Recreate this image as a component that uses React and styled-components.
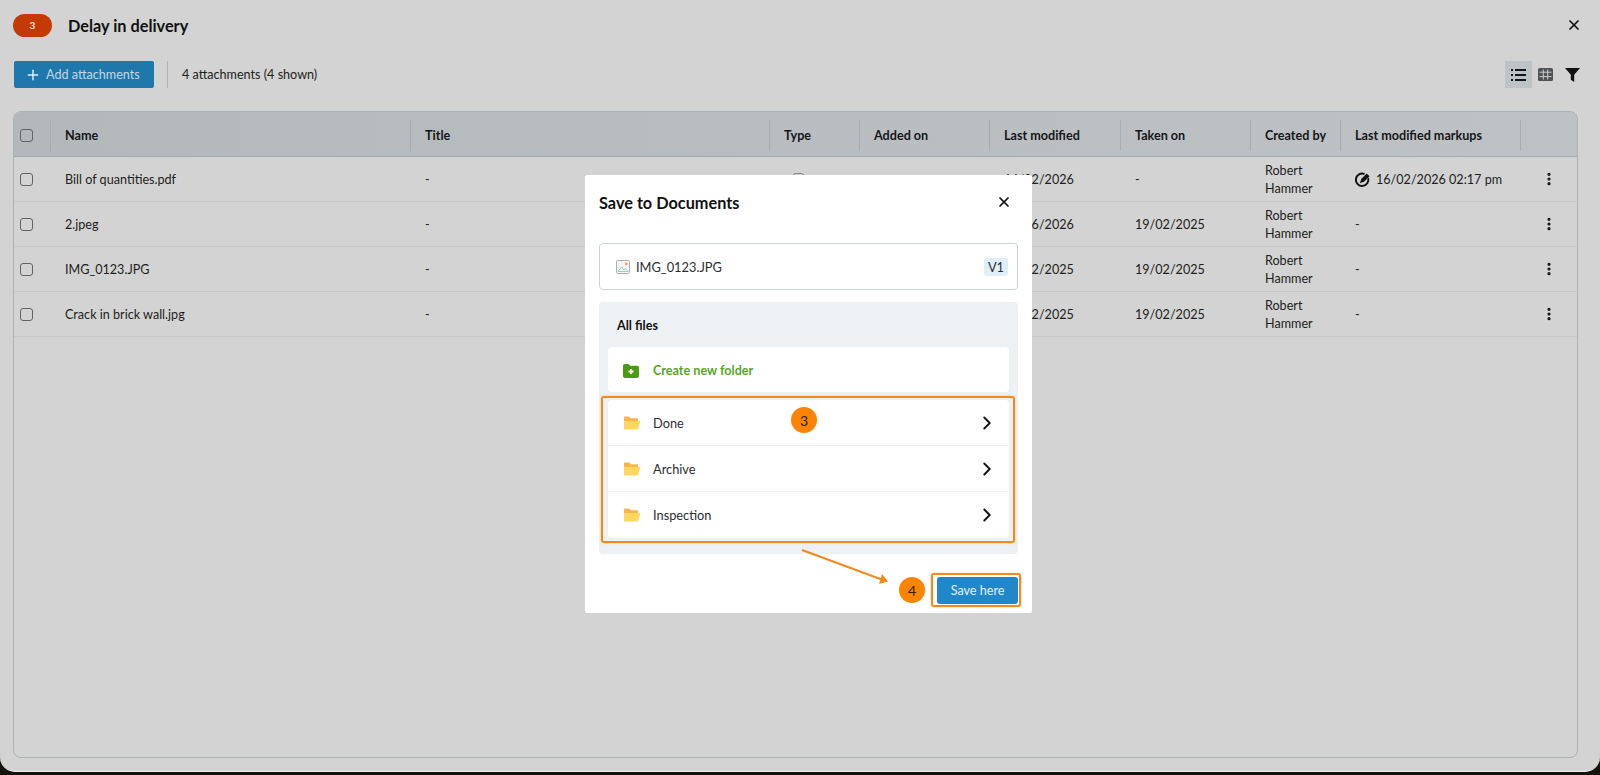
import React from "react";
import styled, { createGlobalStyle } from "styled-components";
import { Plus, X, ChevronRight, EllipsisVertical } from "lucide-react";

const columns = "37px 360px 359px 90px 130px 131px 130px 90px 180px 1fr";

const headers = [
  "Name",
  "Title",
  "Type",
  "Added on",
  "Last modified",
  "Taken on",
  "Created by",
  "Last modified markups",
];

const attachments = [
  { name: "Bill of quantities.pdf", modified: "16/02/2026", taken: "-", markup: "16/02/2026 02:17 pm" },
  { name: "2.jpeg", modified: "16/06/2026", taken: "19/02/2025", markup: "-" },
  { name: "IMG_0123.JPG", modified: "19/02/2025", taken: "19/02/2025", markup: "-" },
  { name: "Crack in brick wall.jpg", modified: "19/02/2025", taken: "19/02/2025", markup: "-" },
];

const folders = ["Done", "Archive", "Inspection"];

const FolderIcon = () => (
  <svg width="18" height="14" viewBox="0 0 18 14">
    <path d="M1 1.5C1 .9 1.4.5 2 .5h4.2l1.6 1.8H14c.6 0 1 .4 1 1V5H1z" fill="#f8b64c" />
    <path d="M1 13.5V5h15.6c.5 0 .9.5.7 1L15 12.8c-.2.4-.5.7-1 .7z" fill="#ffd75e" />
  </svg>
);

const NewFolderIcon = () => (
  <svg width="16" height="14" viewBox="0 0 16 14">
    <path d="M0 2C0 .9.7 0 1.800 0h3.800l1.600 1.800h6.900c1 0 1.900.8 1.900 1.900v8.400c0 1.100-.9 1.900-1.900 1.900H1.800C.7 14 0 13.200 0 12.100z" fill="#4c9a12" />
    <path d="M8 5v5M5.500 7.500h5" stroke="#fff" strokeWidth="1.800" />
  </svg>
);

const ImageIcon = () => (
  <svg width="14" height="14" viewBox="0 0 14 14">
    <rect x=".5" y=".5" width="13" height="13" rx="1" fill="#f4f5f6" stroke="#a9b2b8" />
    <path d="M2 11.500 5.500 7l2.500 3 1.500-1.500 2.500 3z" fill="none" stroke="#a5cdb4" />
    <circle cx="10.300" cy="3.700" r="1.500" fill="#f3a95b" />
  </svg>
);

const MarkupIcon = () => (
  <svg width="16" height="16" viewBox="0 0 16 16">
    <path d="M12.900 5.500A6.200 6.200 0 1 1 9.500 2" fill="none" stroke="#111" strokeWidth="1.900" />
    <path d="M5 11 14 2" stroke="#d3d3d3" strokeWidth="4.400" />
    <path d="M4.800 11.200 6.500 6.700 11.700 1.500 14.500 4.300 9.300 9.500z" fill="#111" />
  </svg>
);

const ListIcon = () => (
  <svg width="15" height="12" viewBox="0 0 15 12">
    <path d="M0 0h2v2H0zM0 5h2v2H0zM0 10h2v2H0z" fill="#15181a" />
    <path d="M4 1h11M4 6h11M4 11h11" stroke="#15181a" strokeWidth="1.800" />
  </svg>
);

const TableIcon = () => (
  <svg width="15" height="13" viewBox="0 0 15 13">
    <rect width="15" height="13" rx="1.500" fill="#4f5356" />
    <path d="M1.500 4.200h12M1.500 8.600h12M5.300 1.500v10M9.700 1.500v10" stroke="#c9cccd" strokeWidth="1" />
  </svg>
);

const FilterIcon = () => (
  <svg width="15" height="14" viewBox="0 0 15 14">
    <path d="M0 0h15L9.200 6.700V14L5.800 11.800V6.700z" fill="#111" />
  </svg>
);

const FileTypeIcon = () => (
  <TypeGlyph width="11" height="14" viewBox="0 0 11 14">
    <rect x=".5" y=".5" width="10" height="13" rx="2" fill="none" stroke="#7d8285" />
  </TypeGlyph>
);

const App = () => {
  return (
    <Screen>
      <GlobalStyle />
      <Sheet>
        <TitleBar>
          <Badge>3</Badge>
          <Title>Delay in delivery</Title>
          <CloseButton>
            <X size={16} strokeWidth={2.6} />
          </CloseButton>
        </TitleBar>

        <Toolbar>
          <AddButton>
            <Plus size={16} strokeWidth={2.2} />
            Add attachments
          </AddButton>
          <ToolbarDivider />
          <Count>4 attachments (4 shown)</Count>
          <ViewTools>
            <ViewButton $active>
              <ListIcon />
            </ViewButton>
            <ViewButton>
              <TableIcon />
            </ViewButton>
            <ViewButton>
              <FilterIcon />
            </ViewButton>
          </ViewTools>
        </Toolbar>

        <Table>
          <HeaderRow>
            <HeaderCell>
              <Check type="checkbox" />
            </HeaderCell>
            {headers.map((header) => (
              <HeaderCell key={header}>{header}</HeaderCell>
            ))}
            <HeaderCell $last />
          </HeaderRow>
          {attachments.map((item) => (
            <Row key={item.name}>
              <CheckCell>
                <Check type="checkbox" />
              </CheckCell>
              <Cell>{item.name}</Cell>
              <Cell>-</Cell>
              <Cell>
                <FileTypeIcon />
              </Cell>
              <Cell />
              <Cell>{item.modified}</Cell>
              <Cell>{item.taken}</Cell>
              <Cell>Robert Hammer</Cell>
              <Cell>
                {item.markup !== "-" && <MarkupIcon />}
                {item.markup}
              </Cell>
              <MenuCell>
                <EllipsisVertical size={16} strokeWidth={2.8} color="#111" />
              </MenuCell>
            </Row>
          ))}
        </Table>

        <Modal>
          <ModalHeader>
            <ModalTitle>Save to Documents</ModalTitle>
            <X size={16} strokeWidth={2.6} color="#111" />
          </ModalHeader>

          <FileBox>
            <ImageIcon />
            <FileName>IMG_0123.JPG</FileName>
            <Version>V1</Version>
          </FileBox>

          <Browser>
            <BrowserTitle>All files</BrowserTitle>
            <CreateRow>
              <IconSlot>
                <NewFolderIcon />
              </IconSlot>
              Create new folder
            </CreateRow>
            <FolderList>
              {folders.map((folder) => (
                <FolderRow key={folder}>
                  <IconSlot>
                    <FolderIcon />
                  </IconSlot>
                  <FolderName>{folder}</FolderName>
                  <ChevronRight size={22} strokeWidth={2} color="#111" />
                </FolderRow>
              ))}
            </FolderList>
            <Highlight />
            <StepThree>3</StepThree>
          </Browser>

          <ModalFooter>
            <StepFour>4</StepFour>
            <SaveFrame>
              <SaveButton>Save here</SaveButton>
            </SaveFrame>
            <Arrow width="92" height="40" viewBox="0 0 92 40">
              <path d="M1 1 82 31" stroke="#f28a1e" strokeWidth="2.200" fill="none" />
              <path d="M78 35 87 32.500 81 25z" fill="#f28a1e" />
            </Arrow>
          </ModalFooter>
        </Modal>
      </Sheet>
    </Screen>
  );
};

const GlobalStyle = createGlobalStyle`
  html, body {
    margin: 0;
    padding: 0;
    background: #14130b;
  }
  body {
    font-family: "Lato", "Liberation Sans", sans-serif;
  }
  * {
    box-sizing: border-box;
  }
`;

const Screen = styled.div`
  width: 1600px;
  height: 775px;
  overflow: hidden;
`;

const Sheet = styled.div`
  position: relative;
  height: 772px;
  padding: 0 22px 0 13px;
  background: #d3d3d3;
  border-bottom: 1px solid #efefef;
  border-radius: 0 0 15px 15px;
  color: #1c1e20;
  display: flex;
  flex-direction: column;
`;

const TitleBar = styled.div`
  height: 50px;
  display: flex;
  align-items: center;
`;

const Badge = styled.div`
  width: 39px;
  height: 23px;
  border-radius: 12px;
  background: #c43a06;
  color: #f3e0d8;
  font-size: 10px;
  font-weight: 700;
  display: grid;
  place-items: center;
`;

const Title = styled.h1`
  margin: 0 0 0 16px;
  font-size: 16.3px;
  font-weight: 700;
  color: #111;
`;

const CloseButton = styled.div`
  margin-left: auto;
  margin-right: -4px;
  display: flex;
  color: #111;
`;

const Toolbar = styled.div`
  height: 27px;
  margin-top: 11px;
  padding-left: 1px;
  display: flex;
  align-items: center;
`;

const AddButton = styled.div`
  width: 140px;
  height: 27px;
  padding-left: 11px;
  border-radius: 2px;
  background: #1f78ab;
  color: #c3d7e2;
  font-size: 12.6px;
  display: flex;
  align-items: center;
  gap: 5px;
  svg {
    color: #e6eef3;
  }
`;

const ToolbarDivider = styled.div`
  width: 1px;
  height: 27px;
  margin: 0 14px 0 13px;
  background: #b0b5b8;
`;

const Count = styled.span`
  font-size: 12.6px;
`;

const ViewTools = styled.div`
  margin-left: auto;
  margin-right: -8px;
  display: flex;
  align-items: center;
`;

const ViewButton = styled.div`
  width: 27px;
  height: 27px;
  display: grid;
  place-items: center;
  background: ${({ $active }) => ($active ? "#bec3c6" : "transparent")};
`;

const Table = styled.div`
  flex: 1;
  margin-top: 23px;
  margin-bottom: 13px;
  border: 1px solid #abb2b6;
  border-radius: 8px;
  overflow: hidden;
`;

const HeaderRow = styled.div`
  height: 45px;
  padding-top: 2px;
  display: grid;
  grid-template-columns: ${columns};
  align-items: center;
  background: linear-gradient(90deg, #b3b8bb, #bec2c5);
  border-bottom: 1px solid #a4abb0;
`;

const HeaderCell = styled.div`
  height: 31px;
  padding-left: 14px;
  border-right: ${({ $last }) => ($last ? "none" : "1px solid #a6adb1")};
  font-size: 12.6px;
  font-weight: 700;
  color: #141618;
  display: flex;
  align-items: center;
  &:first-child {
    padding-left: 6px;
  }
`;

const Row = styled.div`
  height: 45px;
  display: grid;
  grid-template-columns: ${columns};
  align-items: center;
  border-bottom: 1px solid #c6c9cb;
`;

const Cell = styled.div`
  padding: 2px 14px 0;
  font-size: 12.6px;
  line-height: 18px;
  display: flex;
  align-items: center;
  gap: 5px;
`;

const TypeGlyph = styled.svg`
  margin-left: 9px;
`;

const CheckCell = styled.div`
  padding-left: 6px;
  display: flex;
`;

const MenuCell = styled.div`
  display: flex;
  justify-content: center;
`;

const Check = styled.input`
  width: 13px;
  height: 13px;
  margin: 0;
  appearance: none;
  border: 1px solid #5f6468;
  border-radius: 3px;
  background: transparent;
`;

const Modal = styled.div`
  position: absolute;
  left: 585px;
  top: 175px;
  width: 447px;
  height: 438px;
  padding: 0 14px;
  background: #fff;
  border-radius: 2px;
`;

const ModalHeader = styled.div`
  height: 68px;
  padding: 0 6px 14px 0;
  display: flex;
  align-items: center;
  justify-content: space-between;
`;

const ModalTitle = styled.h2`
  margin: 0;
  font-size: 16.3px;
  font-weight: 700;
  color: #111;
`;

const FileBox = styled.div`
  height: 47px;
  padding: 0 9px 0 16px;
  border: 1px solid #c9d3da;
  border-radius: 4px;
  display: flex;
  align-items: center;
`;

const FileName = styled.span`
  margin-left: 6px;
  font-size: 12.8px;
  color: #2b2e31;
`;

const Version = styled.span`
  margin-left: auto;
  padding: 0 4px;
  height: 18px;
  border-radius: 3px;
  background: #e0eef8;
  font-size: 12.8px;
  line-height: 18px;
  color: #2b2e31;
`;

const Browser = styled.div`
  position: relative;
  height: 252px;
  margin-top: 12px;
  padding: 0 9px;
  border-radius: 4px;
  background: #edf1f4;
`;

const BrowserTitle = styled.div`
  height: 45px;
  padding: 2px 0 0 9px;
  font-size: 12.6px;
  font-weight: 700;
  color: #111;
  display: flex;
  align-items: center;
`;

const CreateRow = styled.div`
  height: 45px;
  padding-top: 2px;
  border-radius: 4px;
  background: #fff;
  color: #56a81f;
  font-size: 12.6px;
  font-weight: 700;
  display: flex;
  align-items: center;
`;

const IconSlot = styled.div`
  width: 45px;
  padding-left: 15px;
  display: flex;
`;

const FolderList = styled.div`
  margin-top: 8px;
  border-radius: 4px;
  background: #fff;
`;

const FolderRow = styled.div`
  height: 46px;
  padding-right: 11px;
  display: flex;
  align-items: center;
  border-bottom: 1px solid #f0f3f5;
  &:last-child {
    border-bottom: none;
  }
`;

const FolderName = styled.span`
  flex: 1;
  font-size: 12.8px;
  color: #2b2e31;
`;

const Highlight = styled.div`
  position: absolute;
  left: 2px;
  right: 3px;
  top: 94px;
  height: 147px;
  border: 2.5px solid #f28a1e;
  border-radius: 3px;
  box-shadow: 0 0 2px rgba(242, 138, 30, 0.5);
  pointer-events: none;
`;

const Step = styled.div`
  position: absolute;
  width: 26px;
  height: 26px;
  border-radius: 50%;
  background: #fb8500;
  color: #2e2113;
  font-size: 14px;
  display: grid;
  place-items: center;
`;

const StepThree = styled(Step)`
  left: 192px;
  top: 105px;
`;

const StepFour = styled(Step)`
  position: static;
  margin-right: 6px;
`;

const ModalFooter = styled.div`
  position: relative;
  margin-top: 19px;
  margin-right: -3px;
  display: flex;
  align-items: center;
  justify-content: flex-end;
`;

const SaveFrame = styled.div`
  padding: 2px 1px 1px 4px;
  border: 2px solid #f28a1e;
  border-radius: 3px;
  box-shadow: 0 0 2px rgba(242, 138, 30, 0.5);
`;

const SaveButton = styled.div`
  width: 81px;
  height: 27px;
  border-radius: 3px;
  background: #2287c9;
  color: #e3f0f8;
  font-size: 12.6px;
  display: grid;
  place-items: center;
`;

const Arrow = styled.svg`
  position: absolute;
  left: 202px;
  top: -24px;
`;

export default App;
